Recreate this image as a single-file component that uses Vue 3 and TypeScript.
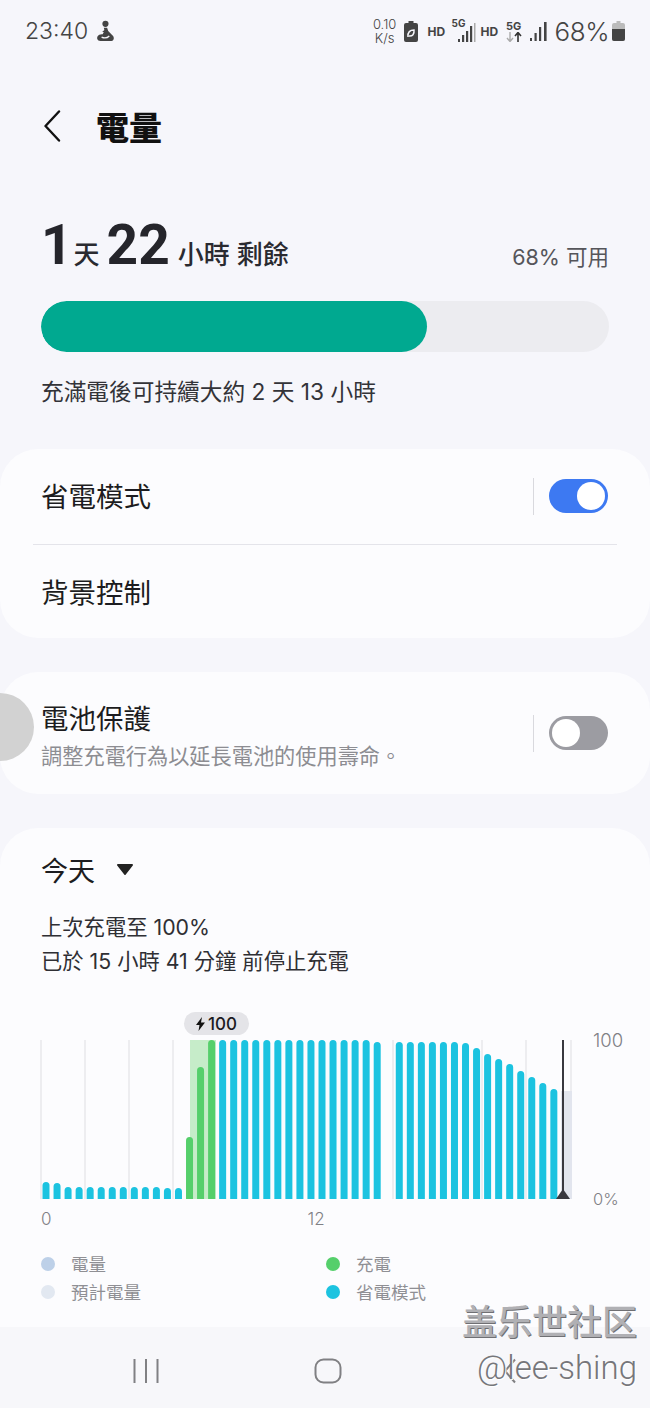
<script setup lang="ts">
const tops: number[] = [
  1182, 1183, 1187, 1187, 1187, 1187, 1187, 1187, 1187, 1187, 1187, 1188, 1188,
  1137, 1067, 1040,
  1040, 1040, 1040, 1040, 1040, 1040, 1040, 1040, 1040, 1040, 1040, 1040, 1040, 1040, 1042,
  0,
  1042, 1042, 1042, 1042, 1042, 1042, 1043, 1048, 1054, 1059, 1064, 1071, 1077, 1083, 1089,
]
const OFFSET = 1030
const bars = tops
  .map((top, i) => ({
    x: 46 + i * 11.04 - 3.5,
    y: top - OFFSET,
    h: 1199 - top,
    color: i >= 13 && i <= 15 ? '#55cf6b' : '#1cc3e0',
    show: top > 0,
  }))
  .filter((b) => b.show)
const grid = [41, 85, 129, 173, 393, 482, 526, 571]
const legend = [
  { label: '電量', color: '#bdd0e8' },
  { label: '充電', color: '#55cf6b' },
  { label: '預計電量', color: '#e2e8f1' },
  { label: '省電模式', color: '#1cc3e0' },
]
</script>

<template>
  <div class="screen">
    <div class="status">
      <div class="status-left">
        <span class="clock">23:40</span>
        <svg class="person" width="18" height="20" viewBox="0 0 18 20">
          <circle cx="8.500" cy="3.500" r="2.800" fill="#444" />
          <path d="M7 7h3l1 3 4 4c2 2 1 5-1 5H4c-3 0-4-3-2-5 1-1 3-1 4-1l1-2H5.500L7.500 9z" fill="#444" />
          <path d="M5 15.500c2 1 5 1 7-1" fill="none" stroke="#f6f6fb" stroke-width="1.200" />
        </svg>
      </div>
      <div class="status-right">
        <div class="speed"><span>0.10</span><span>K/s</span></div>
        <svg width="14" height="21" viewBox="0 0 14 21" class="saver">
          <path d="M4.500 0h5v2H12a2 2 0 0 1 2 2v15a2 2 0 0 1-2 2H2a2 2 0 0 1-2-2V4a2 2 0 0 1 2-2h2.500z" fill="#444" />
          <path d="M4 16c-.5-5 2-7 6-7 .5 4-1.500 6.500-5 6" fill="none" stroke="#f6f6fb" stroke-width="1.500" />
        </svg>
        <span class="hd first">HD</span>
        <div class="sig">
          <span class="fiveg">5G</span>
          <svg width="22" height="22" viewBox="0 0 22 22">
            <rect x="4" y="18" width="2" height="3" fill="#444" />
            <rect x="8" y="14" width="2.200" height="7" fill="#444" />
            <rect x="12" y="10" width="2.200" height="11" fill="#444" />
            <rect x="16" y="5" width="2.200" height="16" fill="#444" />
            <rect x="20" y="2" width="1.500" height="19" fill="#aaa" />
          </svg>
        </div>
        <span class="hd">HD</span>
        <div class="gstack">
          <span class="fiveg">5G</span>
          <svg width="16" height="10" viewBox="0 0 16 10">
            <path d="M4 0v9M1 6l3 3.500L7 6" fill="none" stroke="#aaa" stroke-width="1.400" />
            <path d="M12 10V1M9 4l3-3.500L15 4" fill="none" stroke="#333" stroke-width="1.600" />
          </svg>
        </div>
        <svg class="sig2" width="18" height="20" viewBox="0 0 18 20">
          <rect x="0" y="17" width="2" height="3" fill="#444" />
          <rect x="4.500" y="12" width="2.200" height="8" fill="#444" />
          <rect x="9" y="6" width="2.200" height="14" fill="#444" />
          <rect x="14" y="1" width="2.600" height="19" fill="#444" />
        </svg>
        <span class="pct">68%</span>
        <svg width="13" height="20" viewBox="0 0 13 20">
          <path d="M4.500 0h4v2H11a2 2 0 0 1 2 2v14a2 2 0 0 1-2 2H2a2 2 0 0 1-2-2V4a2 2 0 0 1 2-2h2.500z" fill="#bbb" />
          <path d="M0 8h13v10a2 2 0 0 1-2 2H2a2 2 0 0 1-2-2z" fill="#444" />
        </svg>
      </div>
    </div>

    <header class="title-bar">
      <svg width="18" height="32" viewBox="0 0 18 32" class="back">
        <path d="M16 1.500 2.500 16 16 30.500" fill="none" stroke="#111" stroke-width="2.400" stroke-linecap="round" stroke-linejoin="round" />
      </svg>
      <h1>電量</h1>
    </header>

    <section class="summary">
      <div class="remain">
        <div class="remain-left">
          <b class="big">1</b><span class="unit first-unit">天</span><b class="big second">22</b><span class="unit hours">小時 剩餘</span>
        </div>
        <span class="avail">68% 可用</span>
      </div>
      <div class="track"><div class="fill"></div></div>
      <p class="full">充滿電後可持續大約 2 天 13 小時</p>
    </section>

    <section class="card first-card">
      <div class="row row-mode">
        <span class="row-title">省電模式</span>
        <div class="vline"></div>
        <div class="toggle on"><i></i></div>
      </div>
      <div class="divider"></div>
      <div class="row row-bg"><span class="row-title">背景控制</span></div>
    </section>

    <section class="card protect">
      <div class="protect-text">
        <span class="row-title plain">電池保護</span>
        <span class="desc">調整充電行為以延長電池的使用壽命。</span>
      </div>
      <div class="vline tall"></div>
      <div class="toggle off"><i></i></div>
    </section>

    <section class="card chart-card">
      <div class="period">
        <span>今天</span>
        <svg width="18" height="12" viewBox="0 0 18 12"><path d="M2 2h14l-7 9z" fill="#222" stroke="#222" stroke-width="2" stroke-linejoin="round" /></svg>
      </div>
      <div class="last">
        <p>上次充電至 100%</p>
        <p>已於 15 小時 41 分鐘 前停止充電</p>
      </div>
      <div class="chart">
        <div class="bubble">
          <svg width="9" height="14" viewBox="0 0 9 14"><path d="M6 0 0 8h3.500L2.500 14 9 5.500H5z" fill="#111" /></svg>
          <span>100</span>
        </div>
        <svg class="plot" width="650" height="170" viewBox="0 0 650 170">
          <rect v-for="g in grid" :key="g" :x="g - 0.5" y="10" width="1" height="159" fill="#dedee2" />
          <rect x="190" y="10" width="26" height="159" fill="#c6ecc9" />
          <rect x="561" y="61" width="11" height="108" fill="#e2e5ee" />
          <path v-for="(b, i) in bars" :key="i" :d="`M${b.x} ${b.y + 3.5}a3.500 3.500 0 0 1 7 0V${b.y + b.h}h-7z`" :fill="b.color" />
          <rect x="562" y="10" width="2" height="155" fill="#38383f" />
          <path d="M556 169l7-10 7 10z" fill="#38383f" />
        </svg>
        <div class="axis-right">
          <span>100</span>
          <span>0%</span>
        </div>
      </div>
      <div class="axis-bottom"><span>0</span><span class="twelve">12</span></div>
      <div class="legend">
        <div v-for="l in legend" :key="l.label" class="legend-item">
          <i :style="{ background: l.color }"></i>
          <span>{{ l.label }}</span>
        </div>
      </div>
    </section>

    <nav class="navbar">
      <svg width="26" height="26" viewBox="0 0 26 26">
        <path d="M1.500 1v24M13 1v24M24.500 1v24" stroke="#808083" stroke-width="2" fill="none" />
      </svg>
      <svg width="28" height="26" viewBox="0 0 28 26">
        <rect x="1.500" y="1.500" width="25" height="23" rx="8" fill="none" stroke="#808083" stroke-width="2" />
      </svg>
      <svg width="14" height="26" viewBox="0 0 14 26">
        <path d="M12 1.500 2 13l10 11.500" stroke="#808083" stroke-width="2" fill="none" />
      </svg>
    </nav>
    <div class="watermark">
      <span class="wm-cn">盖乐世社区</span>
      <span class="wm-en">@lee-shing</span>
    </div>
    <div class="handle"></div>
  </div>
</template>

<style>
html, body { margin: 0; background: #f6f6fb; }
</style>

<style scoped>
.screen {
  position: relative;
  width: 650px;
  height: 1408px;
  overflow: hidden;
  background: #f6f6fb;
  font-family: "Inter", "Noto Sans CJK TC", sans-serif;
  color: #1f1f24;
}
.status {
  height: 62px;
  box-sizing: border-box;
  padding: 16px 25px 0 25px;
  display: flex;
  justify-content: space-between;
  align-items: flex-start;
}
.status-left { display: flex; align-items: center; gap: 9px; height: 30px; }
.clock { font-size: 23px; font-weight: 300; color: #444; }
.person { transform: scale(1.1); }
.status-right { display: flex; align-items: center; height: 30px; color: #444; }
.speed { display: flex; flex-direction: column; align-items: center; font-size: 13px; line-height: 14px; width: 24px; margin-right: 7px; font-weight: 300; }
.hd { font-size: 12px; font-weight: 700; width: 17px; text-align: center; }
.hd.first { margin-left: 10px; margin-right: 7px; }
.sig { position: relative; width: 24px; height: 24px; margin-right: 5px; }
.sig .fiveg { position: absolute; left: 0; top: -1px; }
.sig svg { position: absolute; left: 2px; top: 2px; }
.fiveg { font-size: 10px; font-weight: 700; line-height: 11px; }
.gstack { display: flex; flex-direction: column; align-items: center; margin-left: 8px; width: 16px; }
.gstack .fiveg { font-size: 11px; line-height: 12px; }
.sig2 { margin-left: 8px; margin-right: 7px; }
.pct { font-size: 26px; font-weight: 300; color: #444; margin-right: 3px; letter-spacing: -0.5px; }

.title-bar {
  height: 66px;
  margin-top: 31px;
  padding-left: 43px;
  display: flex;
  align-items: center;
  gap: 35px;
}
.title-bar h1 { margin: 0; font-size: 33px; font-weight: 900; color: #111; }

.summary { padding: 0 41px; margin-top: 54px; }
.remain { display: flex; justify-content: space-between; align-items: flex-end; height: 62px; }
.remain-left { display: flex; align-items: baseline; }
.big { font-family: "Roboto", sans-serif; font-size: 55px; font-weight: 700; line-height: 60px; color: #25252b; }
.unit { font-size: 26px; font-weight: 500; color: #2a2a30; }
.first-unit { margin: 0 7px 0 1px; }
.hours { margin-left: 8px; }
.avail { font-size: 21.500px; color: #55555a; padding-bottom: 4px; }
.track { margin-top: 26px; width: 568px; height: 51px; border-radius: 26px; background: #ececf0; overflow: hidden; }
.fill { width: 386px; height: 100%; border-radius: 26px; background: #00a990; }
.full { margin: 24px 0 0; font-size: 22.700px; line-height: 32px; color: #333338; }

.card { background: #fcfcfe; border-radius: 38px; }
.first-card { margin-top: 41px; height: 189px; display: flex; flex-direction: column; }
.row { display: flex; align-items: center; padding: 0 42px 0 41px; }
.row-mode { height: 94px; margin-bottom: 1px; }
.row-bg { flex: 1; }
.row-title { font-size: 27.500px; line-height: 36px; color: #1c1c20; flex: 1; margin-top: 2px; }
.row-title.plain { margin-top: 0; flex: none; }
.vline { width: 1px; height: 37px; background: #d9d9de; margin-right: 15px; }
.divider { height: 1px; margin: 0 33px; background: #e4e4ea; }
.toggle { width: 59px; height: 34px; border-radius: 17px; box-sizing: border-box; padding: 3px; display: flex; }
.toggle i { display: block; width: 28px; height: 28px; border-radius: 50%; background: #fff; }
.toggle.on { background: #3d79f2; justify-content: flex-end; }
.toggle.off { background: #9c9ca2; }

.protect { margin-top: 34px; height: 122px; padding: 0 42px 0 41px; box-sizing: border-box; display: flex; align-items: center; }
.protect-text { flex: 1; display: flex; flex-direction: column; padding-top: 3px; }
.desc { font-size: 21.200px; line-height: 26px; color: #8d8d92; margin-top: 6px; }

.chart-card { margin-top: 34px; height: 600px; position: relative; }
.period { display: flex; align-items: center; gap: 21px; padding: 25px 41px 0; font-size: 27px; line-height: 38px; color: #1c1c20; }
.period svg { margin-bottom: 6px; }
.last { padding: 20px 41px 0; font-size: 21.300px; line-height: 33.500px; color: #2f2f34; }
.last p { margin: 0; }
.chart { position: relative; height: 170px; margin-top: 52px; }
.plot { display: block; }
.bubble {
  position: absolute;
  left: 184px;
  top: -18px;
  width: 65px;
  height: 23px;
  border-radius: 12px;
  background: #e4e4e8;
  display: flex;
  align-items: center;
  justify-content: center;
  gap: 3px;
  font-size: 17px;
  font-weight: 500;
  color: #1b1b1f;
}
.axis-right {
  position: absolute;
  left: 593px;
  top: 0;
  height: 170px;
  display: flex;
  flex-direction: column;
  justify-content: space-between;
  font-size: 18.500px;
  font-weight: 300;
  color: #808085;
}
.axis-right span:first-child { margin-top: -1px; }
.axis-right span:last-child { margin-bottom: -9px; font-size: 16.500px; }
.axis-bottom { display: flex; font-size: 17px; font-weight: 300; color: #808085; padding: 9px 0 0 41px; }
.twelve { margin-left: 256px; }
.legend { display: grid; grid-template-columns: 285px 1fr; padding: 22px 0 0 41px; row-gap: 3px; }
.legend-item { display: flex; align-items: center; height: 25px; font-size: 17.500px; color: #8f8f94; }
.legend-item i { width: 14px; height: 14px; border-radius: 50%; margin-right: 16px; }

.navbar {
  position: absolute;
  left: 0;
  right: 0;
  bottom: 0;
  height: 81px;
  background: #f7f7fa;
  display: grid;
  grid-template-columns: repeat(3, 182px);
  justify-items: center;
  align-items: center;
  box-sizing: border-box;
  padding: 6px 0 0 55px;
}
.watermark {
  position: absolute;
  right: 13px;
  top: 1302px;
  display: flex;
  flex-direction: column;
  align-items: flex-end;
}
.wm-cn { font-size: 35px; line-height: 40px; font-weight: 500; color: #b0b0b4; text-shadow: 1px 1px 0 #6f6f73; }
.wm-en { font-family: "Roboto", sans-serif; font-size: 33px; line-height: 40px; font-weight: 300; color: #76767a; margin-top: 6px; text-shadow: 1px 1px 0 #fff; }
.handle {
  position: absolute;
  left: -34px;
  top: 693px;
  width: 68px;
  height: 68px;
  border-radius: 50%;
  background: #d2d2d2;
}
</style>
